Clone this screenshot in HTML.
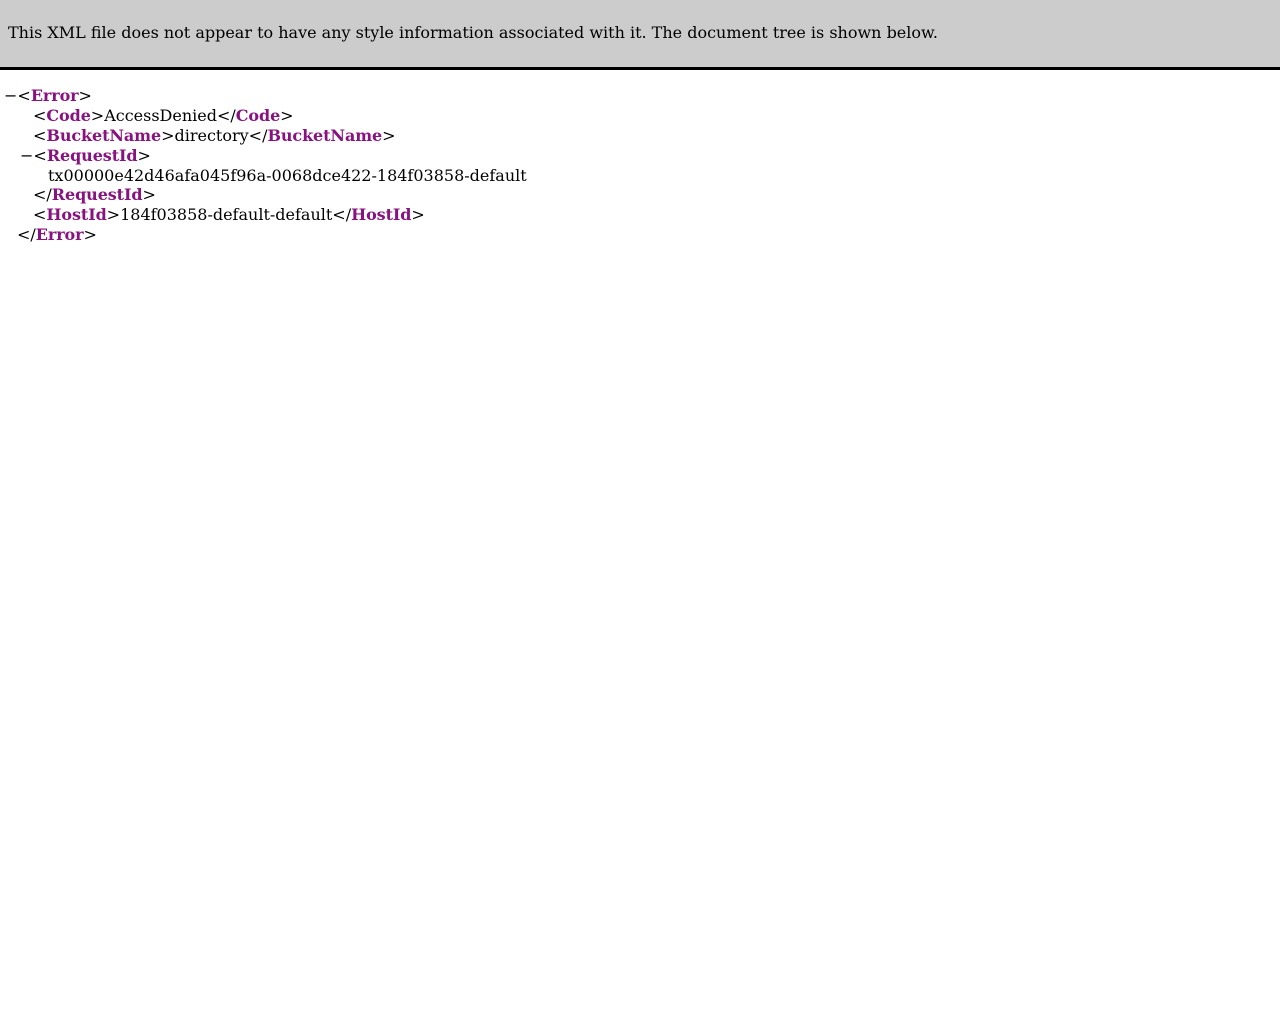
<!DOCTYPE html>
<html><head><meta charset="utf-8"><style>
body{margin:0;background:#fff;font-family:"DejaVu Serif",serif;font-size:16px;color:#000;}
.hd{position:absolute;left:0;top:0;width:1280px;height:67px;background:#ccc;border-bottom:3px solid #000;}
.hd span{position:absolute;left:8px;top:23px;line-height:20px;white-space:nowrap;}
.l{position:absolute;line-height:20px;white-space:nowrap;}
b{color:#881280;letter-spacing:-0.1px;}
</style></head><body>
<div class="hd"><span>This XML file does not appear to have any style information associated with it. The document tree is shown below.</span></div>
<div class="l" style="left:4px;top:86px">−&lt;<b>Error</b>&gt;</div>
<div class="l" style="left:33px;top:106px">&lt;<b>Code</b>&gt;AccessDenied&lt;/<b>Code</b>&gt;</div>
<div class="l" style="left:33px;top:126px">&lt;<b>BucketName</b>&gt;directory&lt;/<b>BucketName</b>&gt;</div>
<div class="l" style="left:20px;top:146px">−&lt;<b>RequestId</b>&gt;</div>
<div class="l" style="left:48px;top:166px">tx00000e42d46afa045f96a-0068dce422-184f03858-default</div>
<div class="l" style="left:33px;top:185px">&lt;/<b>RequestId</b>&gt;</div>
<div class="l" style="left:33px;top:205px">&lt;<b>HostId</b>&gt;184f03858-default-default&lt;/<b>HostId</b>&gt;</div>
<div class="l" style="left:17px;top:225px">&lt;/<b>Error</b>&gt;</div>
</body></html>
